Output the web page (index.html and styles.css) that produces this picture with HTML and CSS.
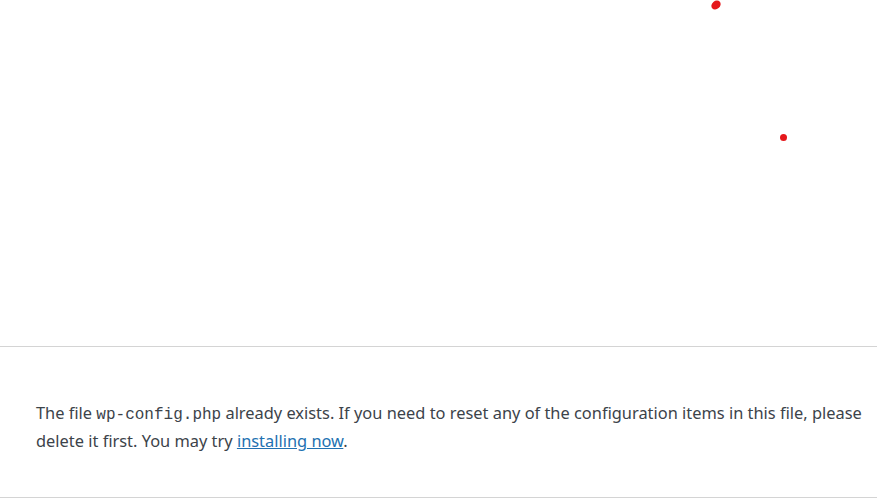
FILE: index.html
```html
<!DOCTYPE html>
<html lang="en">
<head>
<meta charset="utf-8">
<title>WordPress › Error</title>
<link rel="stylesheet" href="styles.css">
</head>
<body>
<div class="canvas">
  <span class="dot dot-a"></span>
  <span class="dot dot-b"></span>
</div>
<div class="box">
  <p class="msg">The file <code>wp-config.php</code> already exists. If you need to reset any of the configuration items in this file, please delete it first. You may try <a href="#">installing now</a>.</p>
</div>
</body>
</html>
```

FILE: styles.css
```css
html, body {
  margin: 0;
  padding: 0;
  background: #fff;
}
body {
  font-family: "Noto Sans", "Open Sans", sans-serif;
  color: #3c434a;
}
.canvas {
  position: relative;
  height: 346px;
}
.dot {
  position: absolute;
  background: #e5171b;
  border-radius: 50%;
}
.dot-a {
  left: 711px;
  top: 1px;
  width: 10px;
  height: 8px;
  transform: rotate(-40deg);
}
.dot-b {
  left: 780px;
  top: 134px;
  width: 7px;
  height: 7px;
}
.box {
  border-top: 1px solid #d4d4d4;
  border-bottom: 1px solid #d4d4d4;
  box-shadow: 0 1px 1px rgba(0,0,0,0.04);
  padding: 52px 4px 42px 36px;
}
.msg {
  margin: 0;
  font-size: 16.4px;
  line-height: 28px;
}
.msg code {
  font-family: "Liberation Mono", "DejaVu Sans Mono", monospace;
  font-size: 16px;
  line-height: 1;
}
.msg a {
  color: #2271b1;
  text-decoration: underline;
}
```
